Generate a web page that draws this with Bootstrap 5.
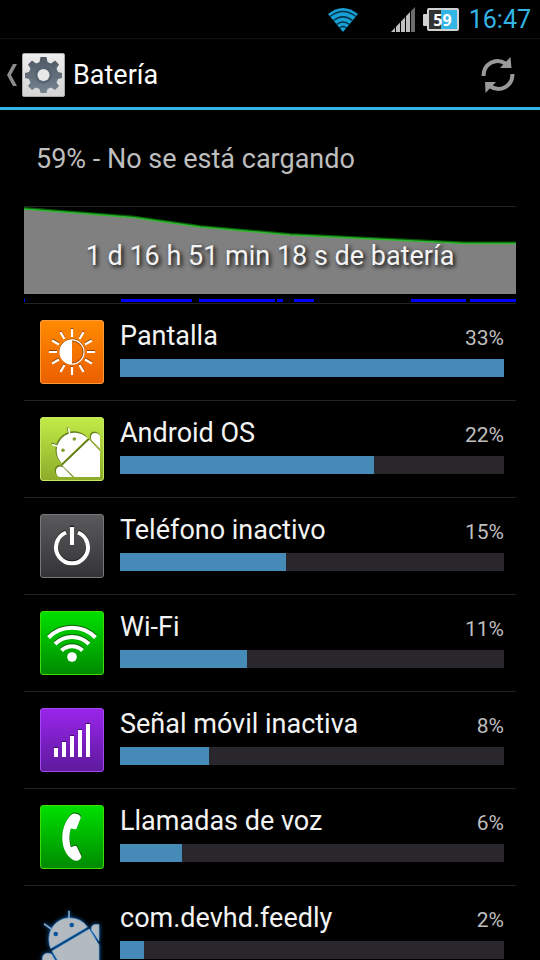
<!DOCTYPE html>
<html lang="es" data-bs-theme="dark">
<head>
<meta charset="utf-8">
<meta name="viewport" content="width=device-width, initial-scale=1">
<title>Batería</title>
<link href="https://cdn.jsdelivr.net/npm/bootstrap@5.3.0/dist/css/bootstrap.min.css" rel="stylesheet">
<style>
  body { background: #000; color: #f3f3f3; font-family: Roboto, "Noto Sans", sans-serif; font-size: 27px; line-height: 32px; }
  svg { display: block; flex: none; }
  .statusbar { height: 39px; padding: 2px 9px 0 0; border-bottom: 1px solid #111; }
  .clock { color: #33b5e5; font-size: 25px; margin-left: 10px; }
  .titlebar { height: 71px; padding: 3px 24px 0 6px; border-bottom: 3px solid #33b5e5; }
  .title-text { font-size: 27px; line-height: 32px; font-weight: 400; margin: 0 0 0 8px; }
  .main-list { scrollbar-width: none; padding: 0 24px; }
  .main-list::-webkit-scrollbar { display: none; }
  .summary { height: 97px; padding: 2px 12px 0; color: #bebebe; border-bottom: 1px solid #222; }
  .history { height: 97px; border-bottom: 1px solid #222; }
  .history-label { top: 33px; text-shadow: 2px 2px 4px #000; }
  .usage { padding: 16px 12px 16px 16px; gap: 16px; border-bottom: 1px solid #222; }
  .usage-head { height: 32px; }
  .percent { font-size: 21px; line-height: 36px; color: #bebebe; }
  .usage .progress { height: 18px; margin-top: 7px; background: #29262c; }
  .usage .progress-bar { background: #468ab8; }
  .glow { filter: drop-shadow(0 0 2px #0a6fd0); overflow: visible; }
</style>
</head>
<body>
<div class="vh-100 d-flex flex-column overflow-hidden">
  <div class="statusbar d-flex align-items-center justify-content-end flex-shrink-0">
    <svg width="32" height="26" viewBox="0 0 32 26" aria-label="Wi-Fi" role="img">
      <path d="M1 7Q16-5 31 7L16 25Z" fill="#189fd3"/>
      <g fill="none" stroke="#003044" stroke-width="1.3"><path d="M3 9.500Q16-.5 29 9.500M6.500 13.500Q16 6 25.500 13.500M9.500 17.500Q16 12.500 22.500 17.500M12.500 21Q16 18 19.500 21"/></g>
    </svg>
    <svg class="ms-4" width="32" height="26" viewBox="-8 0 32 26" aria-label="Señal" role="img">
      <path d="M0 25L19 5V25Z" fill="#bfbfbf"/><path d="M20 4L24 0V25H20Z" fill="#6c6c6c"/>
      <path d="M4.500 15V26M9.500 10V26M14.500 5V26M19.500 0V26" stroke="#000"/>
    </svg>
    <svg class="ms-2" width="36" height="24" viewBox="0 0 36 24" aria-label="Batería 59%" role="img">
      <rect y="6" width="6" height="12" rx="1" fill="#d2d2d2"/>
      <rect x="5" y="1" width="30" height="21" rx="1" fill="#333" stroke="#d2d2d2" stroke-width="2"/>
      <rect x="18" y="2" width="16" height="19" fill="#33b5e5"/>
      <text x="19.500" y="17.500" text-anchor="middle" font-size="16" font-weight="700" font-family="Open Sans, sans-serif" fill="#fff">59</text>
    </svg>
    <span class="clock">16:47</span>
  </div>

  <header class="titlebar d-flex align-items-center flex-shrink-0">
    <a href="#" class="d-flex align-items-center text-reset text-decoration-none" aria-label="Atrás">
      <svg width="12" height="22" viewBox="0 0 12 22"><path d="M7 0H11L5 11L11 22H7L1 11Z" fill="#8c8c8c"/></svg>
      <svg class="ms-1" width="43" height="44" viewBox="0 0 43 44">
        <defs><linearGradient id="plate" x2="0" y2="1"><stop stop-color="#eee"/><stop offset="1" stop-color="#d4d4d4"/></linearGradient>
        <linearGradient id="steel" x2="0" y2="1"><stop stop-color="#4d5864"/><stop offset="1" stop-color="#768390"/></linearGradient></defs>
        <rect x=".5" y=".5" width="42" height="43" rx="1.500" fill="url(#plate)" stroke="#aaa"/>
        <path fill="url(#steel)" d="M18.500 4H24.500L25.500 9L29 10.500L33 7.500L37 11.500L34.500 15.500L36 19L40 20V25L36 26L34.500 29.500L37 33L33 37L29 34.500L25.500 36L24.500 40H18.500L17.500 36L14 34.500L10 37L6 33L8.500 29.500L7 26L3 25V20L7 19L8.500 15.500L6 11.500L10 7.500L14 10.500L17.500 9Z"/>
        <circle cx="21.500" cy="22" r="7.500" fill="none" stroke="#56626f" stroke-width="2"/>
        <circle cx="21.500" cy="22" r="6" fill="#e8e8e8"/>
      </svg>
    </a>
    <h1 class="title-text">Batería</h1>
    <button type="button" class="btn p-0 border-0 ms-auto" aria-label="Actualizar">
      <svg width="36" height="36" viewBox="0 0 36 36">
        <g fill="none" stroke="#999" stroke-width="4"><path d="M3.500 19C3.500 6.500 16 .5 25.500 6.500M32.500 17C32.500 29.500 20 35.500 10.500 29.500"/></g>
        <path d="M30.500 0L31.500 11H20ZM5.500 36L5 25H16Z" fill="#999"/>
      </svg>
    </button>
  </header>

  <main class="main-list flex-grow-1 overflow-auto">
    <div class="summary d-flex align-items-center">59% - No se está cargando</div>
    <div class="history position-relative">
      <svg width="100%" height="96" viewBox="0 0 492 96" preserveAspectRatio="none">
        <path d="M0 1L109 10L176 19L266 27L441 36H492V87H0Z" fill="#808080"/>
        <path d="M0 1L109 9.500L176 19L266 27L441 35.500H492" fill="none" stroke="#075a07" stroke-width="2"/>
        <path d="M0 2L109 10.500L176 20L266 28L441 36.500H492" fill="none" stroke="#2fb62f" stroke-width="1.500"/>
        <path d="M0 93.500H1M97 93.500H168M175 93.500H251M253 93.500H259M270 93.500H290M387 93.500H442M446 93.500H492" stroke="#00f" stroke-width="3"/>
      </svg>
      <div class="history-label position-absolute start-0 end-0 text-center">1 d 16 h 51 min 18 s de batería</div>
    </div>

    <div class="usage d-flex">
      <svg width="64" height="64" viewBox="0 0 64 64">
        <defs><linearGradient id="orange" x2="0" y2="1"><stop stop-color="#ff8a00"/><stop offset="1" stop-color="#eb5f00"/></linearGradient></defs>
        <rect x=".5" y=".5" width="63" height="63" rx="2.500" fill="url(#orange)" stroke="#ff9a35"/>
        <g stroke="#8a4300" stroke-width="2.200" transform="translate(0 -1)"><path id="rays" d="M32 9V17M32 47V55M9 32H17M47 32H55M20.500 12.100L24.500 19M39.500 45L43.500 51.900M12.100 20.500L19 24.500M45 39.500L51.900 43.500M12.100 43.500L19 39.500M45 24.500L51.900 20.500M20.500 51.900L24.500 45M39.500 19L43.500 12.100"/></g>
        <use href="#rays" stroke="#fff" stroke-width="2.200"/>
        <circle cx="32" cy="31.500" r="12.500" fill="none" stroke="#8a4300"/>
        <circle cx="32" cy="32" r="12" fill="none" stroke="#fff" stroke-width="1.300"/>
        <path d="M32 20A12 12 0 0 0 32 44Z" fill="#fff"/><path d="M32 21A11 11 0 0 1 32 43" fill="none" stroke="#8a4300" stroke-width=".8"/>
      </svg>
      <div class="flex-grow-1">
        <div class="usage-head d-flex justify-content-between"><span>Pantalla</span><span class="percent">33%</span></div>
        <div class="progress rounded-0" role="progressbar" aria-label="Pantalla" aria-valuenow="33"><div class="progress-bar" style="width:100%"></div></div>
      </div>
    </div>

    <div class="usage d-flex">
      <svg width="64" height="64" viewBox="0 0 64 64">
        <defs><linearGradient id="lime" x2="0" y2="1"><stop stop-color="#c2ec48"/><stop offset="1" stop-color="#8cab2a"/></linearGradient>
        <g id="robot"><path d="M21.700 46.300A18 18 0 0 1 47.700 21.300Z"/><path d="M22.300 48.500L49.300 22.800L60 34V60H34.300Z"/><path d="M51.500 23C49.500 18 53 15 57 16.500Q60 17.500 60 20V31.500ZM23.500 50.500C20 48.500 16 50 16 54C16 57 17.500 60 20 60H32.500Z"/></g></defs>
        <rect x=".5" y=".5" width="63" height="63" rx="2.500" fill="url(#lime)" stroke="#c4e663"/>
        <use href="#robot" fill="#647e1b" stroke="#647e1b" transform="translate(-.7 -1)"/>
        <path d="M27.500 10.500L29 16M11.500 26.500L18 28.500" stroke="#647e1b" stroke-width="2"/>
        <use href="#robot" fill="#fff"/>
        <path d="M28.300 11L29.700 17M12 27.500L19 29.500" stroke="#fff" stroke-width="1.500"/>
        <path d="M22 47.500L48.500 22" stroke="#647e1b" stroke-width="1.300"/>
        <g fill="#829f2e"><circle cx="34.300" cy="22" r="1.800"/><circle cx="23" cy="33.300" r="1.800"/></g>
      </svg>
      <div class="flex-grow-1">
        <div class="usage-head d-flex justify-content-between"><span>Android OS</span><span class="percent">22%</span></div>
        <div class="progress rounded-0" role="progressbar" aria-label="Android OS" aria-valuenow="22"><div class="progress-bar" style="width:66.100%"></div></div>
      </div>
    </div>

    <div class="usage d-flex">
      <svg width="64" height="64" viewBox="0 0 64 64">
        <defs><linearGradient id="slate" x2="0" y2="1"><stop stop-color="#5a5a5c"/><stop offset="1" stop-color="#343335"/></linearGradient></defs>
        <rect x=".5" y=".5" width="63" height="63" rx="2.500" fill="url(#slate)" stroke="#77777a"/>
        <g fill="none" stroke-width="4"><path d="M26 17.500A16 16 0 1 0 38 17.500M32 11.500V30" stroke="#222"/><path d="M26 18.500A16 16 0 1 0 38 18.500M32 13V31" stroke="#fff"/></g>
      </svg>
      <div class="flex-grow-1">
        <div class="usage-head d-flex justify-content-between"><span>Teléfono inactivo</span><span class="percent">15%</span></div>
        <div class="progress rounded-0" role="progressbar" aria-label="Teléfono inactivo" aria-valuenow="15"><div class="progress-bar" style="width:43.200%"></div></div>
      </div>
    </div>

    <div class="usage d-flex">
      <svg width="64" height="64" viewBox="0 0 64 64">
        <defs><linearGradient id="green" x2="0" y2="1"><stop stop-color="#00e000"/><stop offset="1" stop-color="#008a00"/></linearGradient>
        <path id="waves" d="M8.500 26.500A33 33 0 0 1 55.500 26.500M15 33A24 24 0 0 1 49 33M21.500 39.500A15 15 0 0 1 42.500 39.500" fill="none" stroke-width="4"/></defs>
        <rect x=".5" y=".5" width="63" height="63" rx="2.500" fill="url(#green)" stroke="#3edc00"/>
        <use href="#waves" stroke="#075a07" transform="translate(0 -1)"/>
        <use href="#waves" stroke="#fff"/>
        <circle cx="32" cy="46" r="4.800" fill="#fff"/>
      </svg>
      <div class="flex-grow-1">
        <div class="usage-head d-flex justify-content-between"><span>Wi-Fi</span><span class="percent">11%</span></div>
        <div class="progress rounded-0" role="progressbar" aria-label="Wi-Fi" aria-valuenow="11"><div class="progress-bar" style="width:33.100%"></div></div>
      </div>
    </div>

    <div class="usage d-flex">
      <svg width="64" height="64" viewBox="0 0 64 64">
        <defs><linearGradient id="violet" x2="0" y2="1"><stop stop-color="#9a25ec"/><stop offset="1" stop-color="#5d1a9c"/></linearGradient>
        <path id="bars" d="M14 40H18V49H14ZM22 34H26V49H22ZM30 28H34V49H30ZM38 22H42V49H38ZM46 16H50V49H46Z"/></defs>
        <rect x=".5" y=".5" width="63" height="63" rx="2.500" fill="url(#violet)" stroke="#a347f0"/>
        <use href="#bars" fill="#3e1168" transform="translate(0 -1)"/><use href="#bars" fill="#fff"/>
      </svg>
      <div class="flex-grow-1">
        <div class="usage-head d-flex justify-content-between"><span>Señal móvil inactiva</span><span class="percent">8%</span></div>
        <div class="progress rounded-0" role="progressbar" aria-label="Señal móvil inactiva" aria-valuenow="8"><div class="progress-bar" style="width:23.200%"></div></div>
      </div>
    </div>

    <div class="usage d-flex">
      <svg width="64" height="64" viewBox="0 0 64 64">
        <defs><path id="handset" d="M30.500 10.500Q33 7.500 37 9Q41.500 10.500 40.500 13.500L36.800 23Q36 25 34 24L30.800 23.500Q28 32.500 30.800 42.300L35 40.700Q36.300 40.500 37 42L41.500 51.500Q41.500 53.500 38 55.500Q34.500 56.500 31 53.500C19.500 44 19.500 22 30.500 10.500Z"/></defs>
        <rect x=".5" y=".5" width="63" height="63" rx="2.500" fill="url(#green)" stroke="#3edc00"/>
        <use href="#handset" fill="#075a07" transform="translate(.4 -1)"/><use href="#handset" fill="#fff"/>
      </svg>
      <div class="flex-grow-1">
        <div class="usage-head d-flex justify-content-between"><span>Llamadas de voz</span><span class="percent">6%</span></div>
        <div class="progress rounded-0" role="progressbar" aria-label="Llamadas de voz" aria-valuenow="6"><div class="progress-bar" style="width:16.100%"></div></div>
      </div>
    </div>

    <div class="usage d-flex">
      <svg class="glow" width="64" height="64" viewBox="0 0 64 64">
        <g fill="#b3bbc0" stroke="#6fa6d4" stroke-width=".6">
          <path d="M10.700 46.500C4 28 18 15.500 29.500 16Q41 16 47.500 25Z"/>
          <path d="M12 49L49.300 27L59 43V64H21Z"/>
          <path d="M51.500 28Q50.500 23 55.500 22.500H59V39ZM11.500 52C7 50 2.500 52 2.500 56V64H18.500Z"/>
        </g>
        <path d="M29 8.700V16M4 21.700L12 27.500" stroke="#7ba6c8" stroke-width="1.700"/>
        <g fill="#0c549c"><circle cx="31.700" cy="23" r="2.300"/><circle cx="15.700" cy="32" r="2.300"/></g>
      </svg>
      <div class="flex-grow-1">
        <div class="usage-head d-flex justify-content-between"><span>com.devhd.feedly</span><span class="percent">2%</span></div>
        <div class="progress rounded-0" role="progressbar" aria-label="com.devhd.feedly" aria-valuenow="2"><div class="progress-bar" style="width:6.250%"></div></div>
      </div>
    </div>
  </main>
</div>
<script src="https://cdn.jsdelivr.net/npm/bootstrap@5.3.0/dist/js/bootstrap.bundle.min.js"></script>
</body>
</html>
